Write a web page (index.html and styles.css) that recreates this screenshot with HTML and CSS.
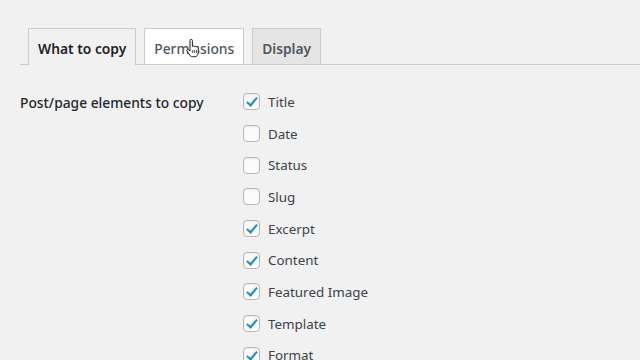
FILE: index.html
```html
<!DOCTYPE html>
<html lang="en">
<head>
  <meta charset="UTF-8">
  <title>Copy settings</title>
  <link rel="stylesheet" href="styles.css">
</head>
<body>

  <nav class="nav-tabs">
    <a class="nav-tab nav-tab-active">What to copy</a>
    <a class="nav-tab nav-tab-hover">Permissions
      <!-- pointer cursor over the tab -->
      <svg class="cursor" width="14" height="19" viewBox="0 0 14 19">
        <path d="M4 1.5c0-.8.6-1.3 1.2-1.3s1.2.5 1.2 1.3v6l.3-.1c.3-.6 1.600-.6 1.9.2.5-.5 1.7-.4 1.9.4.5-.4 1.8-.2 1.8.8v4.5c0 2.4-1.4 4.4-3.4 4.4H6.4c-1.2 0-2-.6-2.7-1.600L1 11.8c-.5-.8.4-1.8 1.3-1.2L4 12z" fill="#fff" stroke="#222" stroke-width="1"/>
        <path d="M6.7 11v3M8.6 11v3M10.5 11v3" stroke="#222" stroke-width=".8"/>
      </svg>
    </a>
    <a class="nav-tab">Display</a>
  </nav>

  <div class="form-row">
    <div class="form-label">Post/page elements to copy</div>
    <div class="options">
      <label class="option"><span class="box checked"></span>Title</label>
      <label class="option"><span class="box"></span>Date</label>
      <label class="option"><span class="box"></span>Status</label>
      <label class="option"><span class="box"></span>Slug</label>
      <label class="option"><span class="box checked"></span>Excerpt</label>
      <label class="option"><span class="box checked"></span>Content</label>
      <label class="option"><span class="box checked"></span>Featured Image</label>
      <label class="option"><span class="box checked"></span>Template</label>
      <label class="option"><span class="box checked"></span>Format</label>
    </div>
  </div>

</body>
</html>
```

FILE: styles.css
```css
body {
  font-family: 'Noto Sans', 'Open Sans', sans-serif;
  background-color: #f1f1f1;
  color: #23282d;
  margin: 0;
  padding: 0 0 0 20px;
  overflow: hidden;
}

.nav-tabs {
  display: flex;
  gap: 8px;
  padding: 28px 0 0 8px;
  border-bottom: 1px solid #cccccc;
  height: 36px;
}

.nav-tab {
  position: relative;
  display: block;
  padding: 2px 9px 0;
  line-height: 36px;
  font-size: 13.8px;
  font-weight: 600;
  color: #50575e;
  background-color: #e5e5e5;
  border: 1px solid #cccccc;
  border-bottom: none;
  margin-bottom: -1px;
  height: 36px;
  box-sizing: border-box;
}

.nav-tab-active {
  background-color: #f1f1f1;
  color: #1d2327;
  height: 37px;
}

.nav-tab-hover {
  background-color: #ffffff;
  color: #50575e;
  font-weight: 500;
}

.cursor {
  position: absolute;
  left: 41px;
  top: 10px;
}

.form-row {
  display: flex;
  padding-top: 21px;
}

.form-label {
  width: 223px;
  font-size: 13.8px;
  font-weight: 500;
  color: #23282d;
  line-height: 32px;
  padding-top: 1px;
}

.options {
  display: flex;
  flex-direction: column;
}

.option {
  display: flex;
  align-items: center;
  height: 31.7px;
  font-size: 13.4px;
  color: #3c434a;
}

.box {
  position: relative;
  width: 15px;
  height: 15px;
  border: 1px solid #b4b9be;
  border-radius: 4px;
  background-color: #fbfbfb;
  box-shadow: inset 0 1px 2px rgba(0, 0, 0, 0.08);
  margin-right: 8px;
}

.box.checked::after {
  content: "";
  position: absolute;
  left: 5px;
  top: 1px;
  width: 4px;
  height: 9px;
  border: solid #1e8cbe;
  border-width: 0 2.5px 2.5px 0;
  transform: rotate(40deg);
}
```
